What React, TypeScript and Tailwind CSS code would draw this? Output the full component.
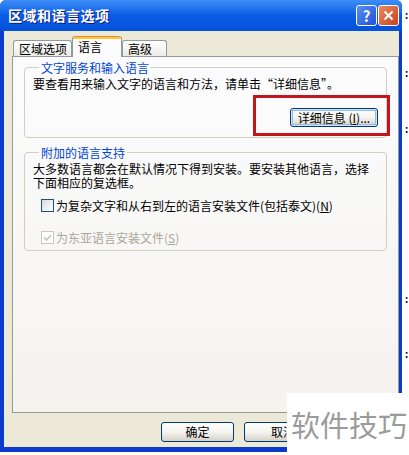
import React from 'react';

const font = { fontFamily: '"Noto Sans CJK SC", "Liberation Sans", sans-serif' };

const XpButton: React.FC<{ children: React.ReactNode; focused?: boolean; className?: string }> = ({ children, focused, className = '' }) => (
  <div
    className={`flex items-center justify-center rounded-[3px] border border-[#003C74] bg-linear-to-b from-[#FFFFFF] via-[#F4F4F0] to-[#D6D0C5] text-[12px] leading-none text-black ${
      focused ? 'shadow-[inset_0_0_0_1px_#CEE7FF,inset_0_0_0_2px_#98B8EA]' : ''
    } ${className}`}
  >
    {children}
  </div>
);

const CheckBox: React.FC<{ checked?: boolean; disabled?: boolean }> = ({ checked, disabled }) => (
  <div
    className={`flex h-[13px] w-[13px] shrink-0 items-center justify-center border ${
      disabled ? 'border-[#CAC8BB] bg-white' : 'border-[#1C5180] bg-linear-to-br from-[#DCDCD7] to-[#FFFFFF]'
    }`}
  >
    {checked && (
      <svg width="9" height="9" viewBox="0 0 9 9">
        <path d="M1 4.5 L3.5 7 L8 2" fill="none" stroke={disabled ? '#CAC8BB' : '#21A121'} strokeWidth="1.8" />
      </svg>
    )}
  </div>
);

const Tab: React.FC<{ label: string; active?: boolean; w: string }> = ({ label, active, w }) =>
  active ? (
    <div className={`${w} relative z-10 -mb-px flex h-[21px] flex-col rounded-t-[3px] border-x border-[#919B9C] bg-[#FCFCFE]`}>
      <div className="h-[3px] rounded-t-[3px] bg-[#FFC83C] border-t border-[#E68B2C]" />
      <span className="pl-[5px] pt-[1px] text-[12px] leading-[14px]">{label}</span>
    </div>
  ) : (
    <div className={`${w} flex h-[16px] items-center rounded-t-[3px] border-x border-t border-[#919B9C] bg-linear-to-b from-white to-[#ECEBE6] pl-[5px] text-[12px] leading-none`}>
      {label}
    </div>
  );

export default function App() {
  return (
    <div className="relative h-[455px] w-[409px] overflow-hidden bg-white text-black" style={font}>
      <div className="flex">
        {/* window */}
        <div className="flex h-[452px] w-[402px] flex-col rounded-t-[6px] bg-[#0B3ACF]">
          {/* title bar */}
          <div className="flex h-[31px] items-center justify-between rounded-t-[6px] bg-linear-to-b from-[#3D8DF8] via-[#0A5BE5] to-[#0552DA] pl-[8px] pr-[3px]">
            <span className="text-[14px] font-bold tracking-[0.5px] text-white [text-shadow:1px_1px_#0A1E8C]">区域和语言选项</span>
            <div className="flex gap-[1px]">
              <div className="flex h-[21px] w-[21px] items-center justify-center rounded-[3px] border border-white bg-linear-to-br from-[#5A8EF8] to-[#1F4FD8] text-[15px] font-bold leading-none text-white">
                ?
              </div>
              <div className="flex h-[21px] w-[21px] items-center justify-center rounded-[3px] border border-white bg-linear-to-br from-[#E98A62] to-[#C8401C]">
                <svg width="11" height="11" viewBox="0 0 11 11">
                  <path d="M1.5 1.5 L9.5 9.5 M9.5 1.5 L1.5 9.5" stroke="white" strokeWidth="2" />
                </svg>
              </div>
            </div>
          </div>

          {/* body */}
          <div className="mx-[4px] mb-[5px] mr-[3px] flex flex-1 flex-col bg-[#ECE9D8] pl-[8px] pt-[5px]">
            <div className="flex items-end pl-[1px]">
              <Tab label="区域选项" w="w-[59px]" />
              <Tab label="语言" w="w-[50px]" active />
              <Tab label="高级" w="w-[45px]" />
            </div>

            {/* tab panel */}
            <div className="flex h-[357px] flex-col border border-[#919B9C] bg-linear-to-b from-[#FCFCFE] to-[#F4F3EE] px-[11px] pt-[3px]">
              <fieldset className="rounded-[4px] border border-[#D0D0BF] px-[8px] pb-[10px]">
                <legend className="ml-[6px] px-[2px] text-[12px] leading-[15px] text-[#0046D5]">文字服务和输入语言</legend>
                <p className="mt-[1px] text-[12px] leading-[15px]">要查看用来输入文字的语言和方法，请单击“详细信息”。</p>
                <div className="mt-[17px] flex justify-end">
                  <div className="relative">
                    <XpButton focused className="h-[19px] w-[88px]">
                      详细信息 (<span className="underline">I</span>)...
                    </XpButton>
                    <div className="absolute -left-[37px] -top-[13px] h-[41px] w-[137px] border-[3px] border-[#C3161C]" />
                  </div>
                </div>
              </fieldset>

              <fieldset className="mt-[7px] rounded-[4px] border border-[#D0D0BF] px-[8px] pb-[5px]">
                <legend className="ml-[6px] px-[2px] text-[12px] leading-[15px] text-[#0046D5]">附加的语言支持</legend>
                <p className="mt-[2px] text-[12px] leading-[14px]">
                  大多数语言都会在默认情况下得到安装。要安装其他语言，选择
                  <br />
                  下面相应的复选框。
                </p>
                <div className="ml-[8px] mt-[8px] flex items-center gap-[2px] text-[12px] leading-[15px]">
                  <CheckBox />
                  <span>
                    为复杂文字和从右到左的语言安装文件(包括泰文)(<span className="underline">N</span>)
                  </span>
                </div>
                <div className="ml-[8px] mt-[17px] flex items-center gap-[2px] text-[12px] leading-[15px] text-[#ACA899]">
                  <CheckBox checked disabled />
                  <span>
                    为东亚语言安装文件(<span className="underline">S</span>)
                  </span>
                </div>
              </fieldset>
            </div>

            {/* dialog buttons */}
            <div className="mt-[9px] flex gap-[10px] pl-[149px]">
              <XpButton className="h-[20px] w-[73px]">确定</XpButton>
              <XpButton className="h-[20px] w-[73px] justify-start pl-[26px]">取消</XpButton>
            </div>
          </div>
        </div>

        {/* desktop sliver */}
        <div className="flex w-[7px] flex-col pl-[3px] pt-[10px] text-[10px] font-bold leading-none text-black">
          <span>:</span>
          <span className="mt-[48px]">:</span>
          <span className="mt-[46px]">:</span>
          <span className="mt-[160px]">:</span>
          <span className="mt-[45px]">:</span>
        </div>
      </div>

      {/* watermark */}
      <div className="absolute bottom-0 right-0 flex h-[62px] w-[122px] items-center justify-center bg-white pl-[2px] text-[29px] leading-none text-[#9B9B9B]">
        软件技巧
      </div>
    </div>
  );
}
